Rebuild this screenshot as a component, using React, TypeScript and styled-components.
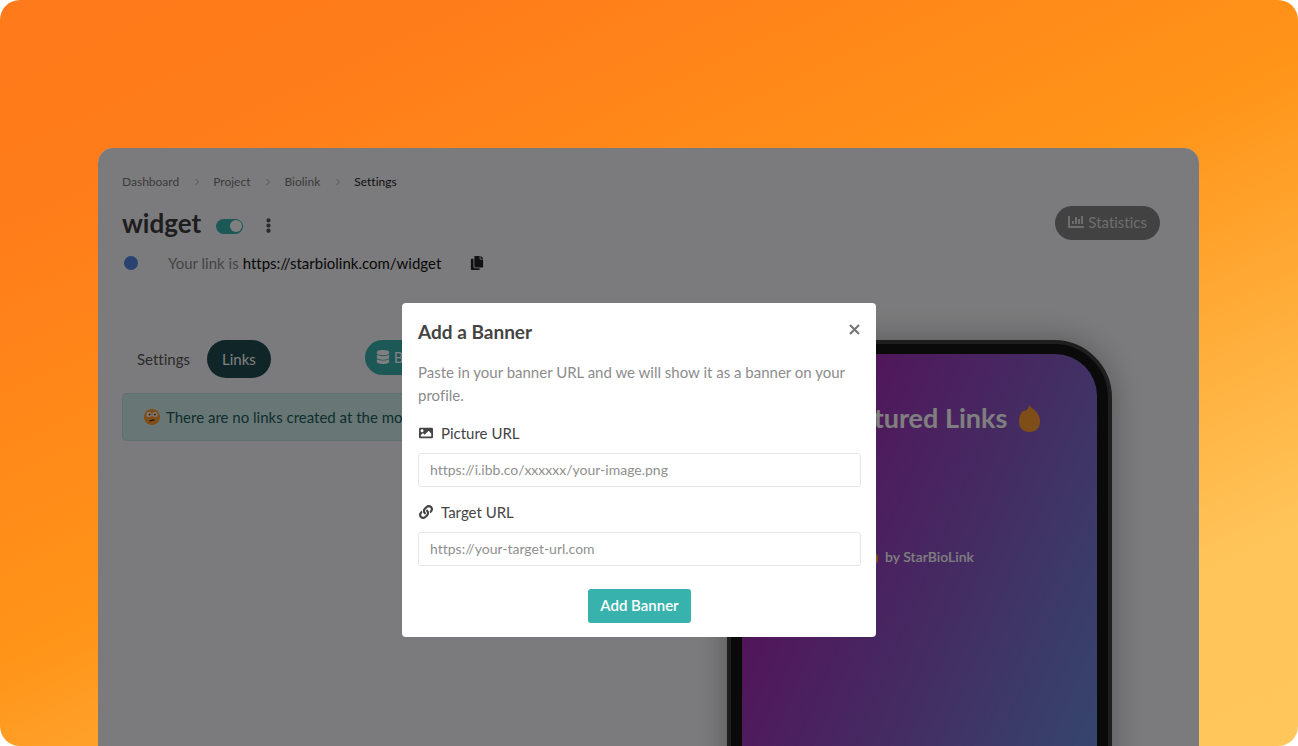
import React from "react";
import styled, { createGlobalStyle } from "styled-components";
import {
  FaChartBar,
  FaCopy,
  FaDatabase,
  FaEllipsisV,
  FaImage,
  FaLink,
} from "react-icons/fa";

const GlobalStyle = createGlobalStyle`
  * { box-sizing: border-box; }
  body {
    margin: 0;
    background: #fff;
    color: #333;
    font-family: Lato, "Liberation Sans", sans-serif;
    font-size: 15px;
    font-variant-ligatures: none;
    line-height: 20px;
  }
  button, input { font: inherit; font-variant-ligatures: none; }
  h1, h2, p, ol { margin: 0; padding: 0; }
  svg { display: block; flex: none; }
`;

const Page = styled.main`
  display: flex;
  height: 100vh;
  overflow: hidden;
  padding: 148px 99px 0 98px;
  border-radius: 20px;
  background: linear-gradient(155deg, #ff7a1a 0%, #ff7c1a 16%, #ff9418 49%, #ffc55a 84%, #ffc65c 100%);
`;

const Window = styled.div`
  position: relative;
  flex: 1;
  overflow: hidden;
  padding: 24px 39px 0 24px;
  border-radius: 15px 15px 0 0;
  background: #f7f7fa;
`;

const Breadcrumb = styled.ol`
  display: flex;
  align-items: center;
  list-style: none;
  font-size: 12px;
`;

const Crumb = styled.li`
  display: flex;
  align-items: center;
`;

const CrumbLink = styled.a<{ $current?: boolean }>`
  color: ${(p) => (p.$current ? "#222" : "#777")};
  text-decoration: none;
`;

const Chevron = styled.svg`
  margin: 0 13px 0 15px;
`;

const Header = styled.header`
  display: flex;
  align-items: center;
  height: 34px;
  margin-top: 14px;
`;

const Title = styled.h1`
  color: #3c3c3e;
  font-size: 26px;
  font-weight: 700;
  line-height: 34px;
`;

const Toggle = styled.input`
  appearance: none;
  display: flex;
  align-items: center;
  width: 27px;
  height: 15px;
  margin: 6px 0 0 15px;
  padding: 1px;
  border-radius: 8px;
  background: #38b2ac;
  &::before {
    content: "";
    width: 12px;
    height: 12px;
    margin-left: auto;
    border-radius: 50%;
    background: #fff;
  }
`;

const IconButton = styled.button`
  display: flex;
  padding: 0;
  border: 0;
  background: none;
  color: #222;
`;

const MoreButton = styled(IconButton)`
  margin: 4px auto 0 18px;
  color: #555;
`;

const Pill = styled.button<{ $tone: string }>`
  display: flex;
  align-items: center;
  gap: 4px;
  height: 34px;
  padding: 0 12px 2px 13px;
  border: 0;
  border-radius: 19px;
  background: ${(p) => p.$tone};
  color: #fff;
  white-space: nowrap;
`;

const StatsPill = styled(Pill)`
  padding-right: 13px;
  color: #ddd;
`;

const LinkRow = styled.p`
  display: flex;
  align-items: center;
  margin-top: 13px;
  color: #888;
`;

const Dot = styled.span`
  width: 14px;
  height: 14px;
  margin: 0 30px 0 2px;
  border-radius: 50%;
  background: #5584e0;
`;

const ProfileLink = styled.a`
  margin: 0 29px 0 4px;
  color: #111;
  text-decoration: none;
`;

const Columns = styled.div`
  display: grid;
  grid-template-columns: minmax(0, 1fr) 481px;
  margin-top: 67px;
`;

const LinksPanel = styled.section`
  padding-right: 24px;
`;

const Tabs = styled.nav`
  display: flex;
  align-items: flex-start;
  gap: 2px;
`;

const Tab = styled.a<{ $active?: boolean }>`
  padding: 9px 15px;
  border-radius: 19px;
  background: ${(p) => (p.$active ? "#1f4a50" : "transparent")};
  color: ${(p) => (p.$active ? "#fff" : "#555")};
  text-decoration: none;
`;

const BlockPill = styled(Pill)`
  height: 35px;
  margin-left: 92px;
  padding-left: 11px;
`;

const Notice = styled.p`
  display: flex;
  align-items: center;
  gap: 6px;
  height: 48px;
  margin-top: 15px;
  padding: 0 21px;
  border: 1px solid #bfe3e2;
  border-radius: 4px;
  background: #d0eceb;
  color: #1d5c60;
`;

const PhoneArea = styled.aside`
  display: flex;
  justify-content: center;
`;

const Phone = styled.div`
  width: 385px;
  height: 760px;
  padding: 10px 11px;
  border: 4px solid #3c3c3c;
  border-radius: 58px;
  background: #141414;
  box-shadow: 0 0 32px rgba(0, 0, 0, 0.3);
`;

const Screen = styled.div`
  display: flex;
  flex-direction: column;
  align-items: center;
  height: 100%;
  padding-top: 46px;
  border-radius: 42px;
  background: linear-gradient(113deg, #a626b2 0, #a626b2 90px, #6890dc 500px);
  color: #fff;
`;

const ScreenTitle = styled.h2`
  display: flex;
  align-items: center;
  gap: 12px;
  font-size: 27px;
  font-weight: 700;
  line-height: 36px;
`;

const Credit = styled.p`
  display: flex;
  align-items: center;
  gap: 6px;
  margin-top: 111px;
  font-size: 14px;
  font-weight: 600;
`;

const Backdrop = styled.div`
  position: absolute;
  inset: 0;
  display: flex;
  align-items: flex-start;
  justify-content: center;
  padding: 155px 19px 0 0;
  background: rgba(0, 0, 0, 0.5);
`;

const Dialog = styled.form`
  display: flex;
  flex-direction: column;
  width: 474px;
  padding: 17px 15px 14px 16px;
  border-radius: 4px;
  background: #fff;
`;

const DialogHead = styled.div`
  display: flex;
  align-items: center;
  justify-content: space-between;
`;

const DialogTitle = styled.h2`
  color: #444;
  font-size: 19px;
  font-weight: 700;
  line-height: 24px;
`;

const CloseButton = styled(IconButton)`
  padding: 0 1px 5px;
  color: #777;
`;

const Intro = styled.p`
  margin: 17px 0 1px;
  color: #8c8c8c;
  line-height: 23px;
`;

const FieldLabel = styled.label`
  display: flex;
  align-items: center;
  gap: 8px;
  margin: 15px 0 10px;
  padding-left: 1px;
  color: #444;
`;

const Field = styled.input`
  height: 34px;
  padding: 0 11px 2px;
  border: 1px solid #e6e6e6;
  border-radius: 3px;
  background: #fff;
  color: #444;
  font-size: 14px;
  &::placeholder { color: #8f8f8f; opacity: 1; }
`;

const SubmitButton = styled.button`
  align-self: center;
  height: 34px;
  margin-top: 23px;
  padding: 0 12px 2px;
  border: 0;
  border-radius: 3px;
  background: #38b2ac;
  color: #fff;
  font-weight: 600;
`;

const Flame = ({ width, height }: { width: number; height: number }) => (
  <svg width={width} height={height} viewBox="0 0 21 27" aria-hidden="true">
    <path
      fill="#ff9a2e"
      d="M10.500 0c.8 1.600 2 2.700 4 4.200C18.700 7.400 21 11.500 21 16.500 21 23 16.500 27 10.500 27S0 23 0 16.500C0 12 1 9 3.500 6.500c.8-.7 1.500-1.100 2-1.200.5.500 1 .5 1.600 0C8.800 4 9.900 2.200 10.500 0z"
    />
  </svg>
);

const Face = () => (
  <svg width="16" height="16" viewBox="0 0 16 16" aria-hidden="true">
    <circle cx="8" cy="8" r="8" fill="#ff9a2e" />
    <circle cx="5" cy="5.500" r="2.500" fill="#fff" />
    <circle cx="11" cy="5.500" r="2.500" fill="#fff" />
    <circle cx="5.500" cy="5.500" r="1" fill="#553311" />
    <circle cx="11" cy="5.500" r="1" fill="#553311" />
    <path d="M6 11.800 10 10.800" stroke="#442200" strokeWidth="1.200" strokeLinecap="round" />
  </svg>
);

const crumbs = ["Dashboard", "Project", "Biolink", "Settings"];

export default function App() {
  return (
    <>
      <GlobalStyle />
      <Page>
        <Window>
          <nav aria-label="Breadcrumb">
            <Breadcrumb>
              {crumbs.map((name, i) => (
                <Crumb key={name}>
                  {i > 0 && (
                    <Chevron width="6" height="8" viewBox="0 0 6 8" aria-hidden="true">
                      <path d="M1.500 1 4.500 4 1.500 7" fill="none" stroke="#aaa" />
                    </Chevron>
                  )}
                  <CrumbLink href="#" $current={i === crumbs.length - 1}>
                    {name}
                  </CrumbLink>
                </Crumb>
              ))}
            </Breadcrumb>
          </nav>

          <Header>
            <Title>widget</Title>
            <Toggle type="checkbox" defaultChecked aria-label="Enabled" />
            <MoreButton type="button" aria-label="More">
              <FaEllipsisV size={15} />
            </MoreButton>
            <StatsPill type="button" $tone="#848484">
              <FaChartBar size={16} />
              Statistics
            </StatsPill>
          </Header>

          <LinkRow>
            <Dot />
            Your link is
            <ProfileLink href="#">https://starbiolink.com/widget</ProfileLink>
            <IconButton type="button" aria-label="Copy link">
              <FaCopy size={14} />
            </IconButton>
          </LinkRow>

          <Columns>
            <LinksPanel>
              <Tabs>
                <Tab href="#">Settings</Tab>
                <Tab href="#" $active>
                  Links
                </Tab>
                <BlockPill type="button" $tone="#38b2ac">
                  <FaDatabase size={14} />
                  Block
                </BlockPill>
              </Tabs>
              <Notice>
                <Face />
                There are no links created at the moment
              </Notice>
            </LinksPanel>
            <PhoneArea>
              <Phone>
                <Screen>
                  <ScreenTitle>
                    <Flame width={21} height={27} />
                    Featured Links
                    <Flame width={21} height={27} />
                  </ScreenTitle>
                  <Credit>
                    <Flame width={14} height={16} />
                    by StarBioLink
                  </Credit>
                </Screen>
              </Phone>
            </PhoneArea>
          </Columns>

          <Backdrop>
            <Dialog role="dialog" aria-labelledby="banner-title">
              <DialogHead>
                <DialogTitle id="banner-title">Add a Banner</DialogTitle>
                <CloseButton type="button" aria-label="Close">
                  <svg width="11" height="11" viewBox="0 0 11 11" aria-hidden="true">
                    <path d="M1 1 10 10M10 1 1 10" stroke="currentColor" strokeWidth="2.200" />
                  </svg>
                </CloseButton>
              </DialogHead>
              <Intro>
                Paste in your banner URL and we will show it as a banner on your profile.
              </Intro>
              <FieldLabel htmlFor="picture-url">
                <FaImage size={14} />
                Picture URL
              </FieldLabel>
              <Field id="picture-url" placeholder="https://i.ibb.co/xxxxxx/your-image.png" />
              <FieldLabel htmlFor="target-url">
                <FaLink size={14} />
                Target URL
              </FieldLabel>
              <Field id="target-url" placeholder="https://your-target-url.com" />
              <SubmitButton type="submit">Add Banner</SubmitButton>
            </Dialog>
          </Backdrop>
        </Window>
      </Page>
    </>
  );
}
